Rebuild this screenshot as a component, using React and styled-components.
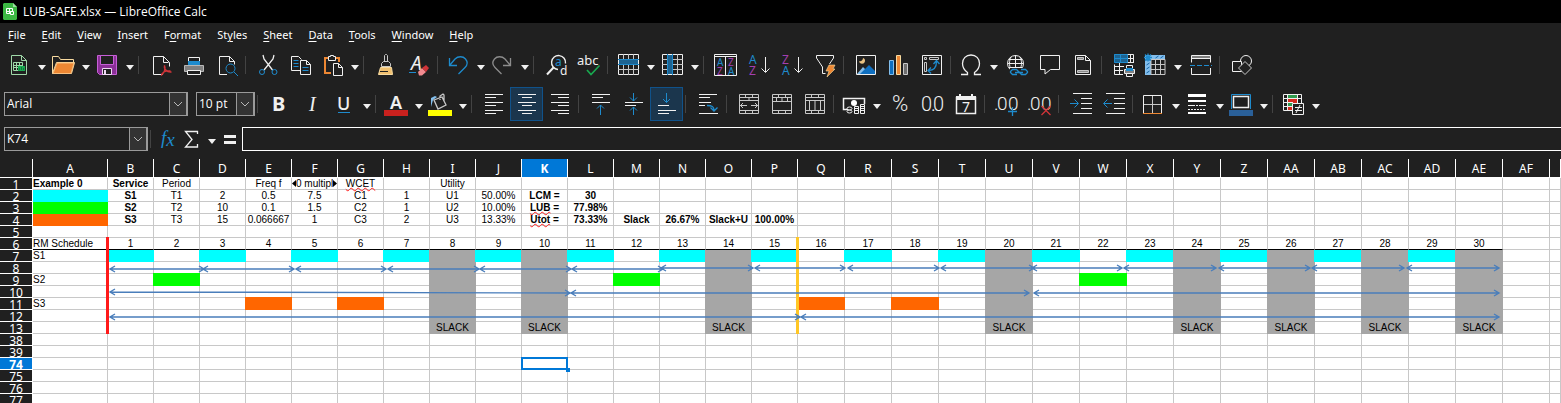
import React from "react";
import styled, { createGlobalStyle, css } from "styled-components";

const UI_FONT = '"Noto Sans", "Open Sans", sans-serif';
const CELL_FONT = '"Liberation Sans", Arial, sans-serif';

const color = {
  bg: "#202020",
  line: "#f0f0f0",
  soft: "#c8c8c8",
  blue: "#1e8bcd",
  purple: "#a33fb0",
  orange: "#ed8733",
  green: "#18ab50",
  red: "#d13438",
  select: "#0078d7",
  grid: "#c8c8c8",
};

const GlobalStyle = createGlobalStyle`
  *, *::before, *::after { box-sizing: border-box; }
  html, body { margin: 0; background: ${color.bg}; }
`;

/* ---------- frame ---------- */

const Window = styled.div`
  display: flex;
  flex-direction: column;
  height: 100vh;
  overflow: hidden;
  background: ${color.bg};
  color: #fff;
  font: 12px/16px ${UI_FONT};
`;

const TitleBar = styled.header`
  display: flex;
  align-items: center;
  gap: 6px;
  flex: none;
  height: 23px;
  padding-left: 3px;
  background: #000;
`;

const Title = styled.h1`
  margin: 0;
  font: 400 12px/16px "Open Sans", "Noto Sans", sans-serif;
`;

const MenuBar = styled.nav`
  display: flex;
  flex: none;
  align-items: center;
  gap: 16px;
  height: 24px;
  padding-left: 8px;
`;

const MenuItem = styled.button`
  padding: 0;
  border: 0;
  background: none;
  color: inherit;
  font: 11px/16px ${UI_FONT};

  u {
    text-underline-offset: 2px;
  }
`;

const ToolRow = styled.div`
  display: flex;
  flex: none;
  align-items: center;
  height: ${(p) => p.$height}px;
  padding-left: 4px;
`;

const Separator = styled.span`
  flex: none;
  width: 1px;
  height: 18px;
  margin: 0 5px 0 2px;
  background: #434343;
`;

const ToolButton = styled.button`
  display: flex;
  flex: none;
  align-items: center;
  justify-content: flex-start;
  width: ${(p) => (p.$split ? 30 : 33)}px;
  height: 34px;
  padding: 0 0 0 ${(p) => (p.$split ? 3 : 5)}px;
  border: 0;
  background: none;
  ${(p) =>
    p.$on &&
    css`
      background: #1b364d;
      box-shadow: inset 0 0 0 1px #10528a;
    `}
`;

const DropButton = styled.button`
  display: flex;
  flex: none;
  align-items: center;
  width: 14px;
  height: 34px;
  padding: 0;
  border: 0;
  background: none;
`;

const Glyph = styled.svg`
  display: block;
  flex: none;
  overflow: visible;
  fill: none;
  stroke: ${color.line};
  stroke-width: 1;

  text {
    stroke: none;
    fill: ${color.line};
    font-family: ${UI_FONT};
  }
`;

/* ---------- combo boxes ---------- */

const ComboBox = styled.label`
  display: grid;
  grid-template-columns: 1fr 18px;
  flex: none;
  width: ${(p) => p.$width}px;
  height: 24px;
  margin-right: ${(p) => p.$after}px;
  border: 1px solid #9a9a9a;
`;

const comboText = css`
  grid-row: 1;
  grid-column: 1 / 3;
  min-width: 0;
  padding: 0 20px 0 2px;
  border: 0;
  outline: 0;
  appearance: none;
  background: none;
  color: #fff;
  font: 12px/20px "Open Sans", "Noto Sans", sans-serif;
`;

const ComboSelect = styled.select`
  ${comboText}
`;

const ComboInput = styled.input`
  ${comboText}
`;

const ComboArrow = styled.span`
  display: flex;
  grid-row: 1;
  grid-column: 2;
  align-items: center;
  justify-content: center;
  border: 1px solid #9a9a9a;
  border-width: 0 1px;
  background: #333;
  pointer-events: none;
`;

const FormulaRow = styled.div`
  display: flex;
  flex: none;
  align-items: center;
  height: 34px;
  padding: 2px 0 8px 4px;
`;

const FormulaButton = styled.button`
  display: flex;
  flex: none;
  width: 24px;
  height: 24px;
  padding: 0;
  border: 0;
  background: none;
`;

const FormulaInput = styled.input`
  flex: 1;
  min-width: 0;
  height: 24px;
  border: 1px solid #fff;
  border-right: 0;
  outline: 0;
  background: ${color.bg};
  color: #fff;
  font: 12px/20px ${UI_FONT};
`;

/* ---------- sheet ---------- */

const Sheet = styled.main`
  position: relative;
  flex: 1;
  min-height: 0;
  overflow: hidden;
  background: #fff;
`;

const Table = styled.table`
  width: 100%;
  border-collapse: separate;
  border-spacing: 0;
  table-layout: fixed;
`;

const ColumnHead = styled.th`
  height: 19px;
  padding: 2px 0 0;
  border-right: 1px solid #fff;
  border-bottom: 1px solid #fff;
  background: ${(p) => (p.$active ? color.select : color.bg)};
  color: #fff;
  font: ${(p) => (p.$active ? 700 : 400)} 12px/16px ${UI_FONT};
`;

const RowHead = styled.th`
  height: 12px;
  padding: 0;
  border-right: 1px solid #fff;
  border-bottom: 1px solid #fff;
  background: ${(p) => (p.$active ? color.select : color.bg)};
  color: #fff;
  font: ${(p) => (p.$active ? 700 : 400)} 12px/13px ${UI_FONT};
`;

const RowNumber = styled.div`
  height: 11px;
  overflow: hidden;
`;

const Cell = styled.td`
  position: relative;
  height: 12px;
  padding: 0;
  border-right: 1px solid ${(p) => p.$fill || color.grid};
  border-bottom: 1px solid ${(p) => (p.$underline ? "#000" : p.$fill || color.grid)};
  background: ${(p) => p.$fill || "transparent"};
  color: #000;
  font: ${(p) => (p.$bold ? 700 : 400)} 10px/11px ${CELL_FONT};
  text-align: ${(p) => (p.$left ? "left" : "center")};
  white-space: nowrap;
  ${(p) =>
    p.$fill &&
    !p.$left &&
    css`
      box-shadow: -1px 0 0 0 ${p.$fill}${p.$coverTop ? `, 0 -1px 0 0 ${p.$fill}, -1px -1px 0 0 ${p.$fill}` : ""};
    `}
  ${(p) =>
    p.$marker &&
    css`
      &::after {
        content: "";
        position: absolute;
        z-index: 1;
        top: -1px;
        right: -2px;
        bottom: -1px;
        width: 3px;
        background: ${p.$marker};
      }
    `}
  ${(p) =>
    p.$cursor &&
    css`
      &::before {
        content: "";
        position: absolute;
        top: -1px;
        right: -1px;
        bottom: -1px;
        left: -1px;
        border: 2px solid ${color.select};
      }
      &::after {
        content: "";
        position: absolute;
        z-index: 1;
        right: -3px;
        bottom: -3px;
        width: 4px;
        height: 4px;
        background: ${color.select};
      }
    `}
`;

const CellText = styled.div`
  display: flex;
  align-items: center;
  justify-content: ${(p) => (p.$left ? "flex-start" : "center")};
  height: 11px;
  overflow: ${(p) => (p.$clip ? "hidden" : "visible")};
`;

const Misspelled = styled.span`
  text-decoration: underline wavy #ff2020 1px;
  text-decoration-skip-ink: none;
  text-underline-offset: 0;
`;

const ClippedText = styled.span`
  flex: 1;
  min-width: 0;
  overflow: hidden;
  text-align: left;
`;

const Drawing = styled.svg`
  position: absolute;
  top: 0;
  left: 0;
  z-index: 2;
  fill: none;
  stroke: #4a7ebb;
  stroke-width: 1.4;
  pointer-events: none;
`;

/* ---------- icons ---------- */

const B = color.blue;
const S = color.soft;

const icons = {
  newSheet: (
    <>
      <path stroke="#9fd8a8" d="M4.5 2.5h10l5 5v14h-15zM14.5 2.5v5h5" />
      <path stroke="#9fd8a8" d="M6.5 9.5h9v8h-9zM6.5 12.5h9M6.5 14.5h9M9.5 9.5v8M12.5 9.5v8" />
      <path fill="#18ab50" stroke="none" d="M11 13h7v5h-7z" />
      <path stroke="#107a38" d="M12.5 17v-2M14.5 17v-3M16.5 17v-2" />
    </>
  ),
  open: (
    <>
      <path stroke="#f8dba0" d="M1.5 20.5v-17h6l2 3h13v4M1.5 20.5l4-11h18l-3 11z" />
      <path fill={color.orange} stroke="#f8c080" d="M2 20.5l4-10.5h17l-3 10.5z" />
    </>
  ),
  save: (
    <>
      <path fill="#8b2f97" stroke="#c65fd6" d="M2.5 2.5h19v19h-17l-2-2z" />
      <path fill={color.bg} stroke="#c65fd6" d="M5.5 2.5h13v9h-13z" />
      <path fill={color.bg} stroke="#f0d8f4" d="M7.5 15.5h9v6h-9z" />
      <path fill="#f0d8f4" stroke="none" d="M9 17h2v5H9z" />
    </>
  ),
  pdf: (
    <>
      <path d="M14 21.5H4.5v-18h10l6 6v4M14.5 3.5v6h5" />
      <path stroke={color.red} strokeWidth="1.4" d="M15.500 12.500c1.500 3-.5 8-3.500 10M15.500 12.500c-1 3 2 7 7 6.500M12.500 21.500c2-3 5-4 9-3.500" />
    </>
  ),
  print: (
    <>
      <path fill="#808080" stroke="#b8b8b8" d="M2.500 12.500h19v6h-19z" />
      <path d="M6.500 10V4.500h11V10" />
      <path fill={B} stroke="none" d="M6 8h12v4H6z" />
      <path fill={color.bg} d="M5.500 17.500h13v4h-13z" />
    </>
  ),
  preview: (
    <>
      <path d="M12 21.500H4.500v-18h10l5 5v3M14.500 3.500v5h5" />
      <circle cx="15.500" cy="15.500" r="4.500" stroke={B} />
      <path stroke={B} d="M19 19l4 4" />
    </>
  ),
  cut: (
    <>
      <path strokeWidth="1.3" d="M7 2l1 4 8.500 11M18 2l-1 4L8 17" />
      <circle cx="6" cy="19" r="2.500" stroke={B} />
      <circle cx="18.500" cy="19" r="2.500" stroke={B} />
    </>
  ),
  copy: (
    <>
      <path d="M11 17.500H2.500v-14h7l3 3" />
      <path stroke={B} d="M4.500 7.500h5M4.500 10.500h5M4.500 13.500h5" />
      <path d="M11.500 7.500h6l4 4v10h-10zM17.500 7.500v4h4" />
      <path stroke={B} d="M13.500 14.500h6M13.500 17.500h6" />
    </>
  ),
  paste: (
    <>
      <path stroke={color.orange} strokeWidth="2" d="M11 20H5V5h3M16 5h3v4" />
      <path d="M8.500 7.500v-4h2v-1h3v1h2v4z" />
      <path fill={color.bg} d="M13.500 10.500h5l4 4v8h-9zM18.500 10.500v4h4" />
    </>
  ),
  clone: (
    <>
      <path stroke={S} d="M10.500 8.500v-6l1-1h1l1 1v6M7.500 13.500v-3l2-2h5l2 2v3z" />
      <path fill="#f0c070" stroke="#f8dba0" d="M6.500 14.500h11l1 7h-14z" />
      <path stroke={color.bg} d="M6 18.500h8" />
    </>
  ),
  clear: (
    <>
      <text x="4" y="17" fontSize="19" fontStyle="italic">A</text>
      <path stroke={B} d="M2 19.500h7" />
      <path fill="#f28b90" stroke="none" d="M11 19l4-4 4 4-4 3.500h-3z" />
      <path fill={color.red} stroke="none" d="M15 15l4-3 3 3-3 4z" />
    </>
  ),
  undo: <path stroke={B} strokeWidth="1.300" d="M3.500 5v7.500H11M3.500 12.500L9 6c3-3 8-3 10.500 0s2 6-.5 8.500L12.500 21" />,
  redo: <path stroke="#8c8c8c" strokeWidth="1.300" d="M20.500 5v7.500H13M20.500 12.500L15 6C12 3 7 3 4.500 6s-2 6 .5 8.500L11.500 21" />,
  find: (
    <>
      <path d="M14 16.500a7 7 0 1 1 7.500-6" strokeWidth="1.400" />
      <path strokeWidth="2" d="M9.500 14.500L3 21.500" />
      <text x="11" y="13" fontSize="12" style={{ fill: B }}>a</text>
      <text x="16" y="22" fontSize="12">d</text>
    </>
  ),
  spell: (
    <>
      <text x="0" y="12" fontSize="13">abc</text>
      <path stroke={color.green} strokeWidth="1.600" d="M10 17l4 4.500 8.500-9" />
    </>
  ),
  row: (
    <>
      <path fill="#1d6391" stroke="none" d="M2 6h21v6H2z" />
      <path d="M2.500 1.500h20v20h-20z" />
      <path stroke={S} d="M2 6.500h21M2 11.500h21M2 16.500h21M7.500 1v5M12.500 1v5M17.500 1v5M7.500 12v10M12.500 12v10M17.500 12v10" />
      <path stroke={B} d="M2 6.500h21M2 11.500h21" />
    </>
  ),
  column: (
    <>
      <path fill="#1d6391" stroke="none" d="M7 1h6v21H7z" />
      <path d="M2.500 1.500h20v20h-20z" />
      <path stroke={S} d="M2 6.500h5M13 6.500h10M2 11.500h5M13 11.500h10M2 16.500h5M13 16.500h10M17.500 1v21" />
      <path stroke={B} d="M7.500 1v21M12.500 1v21" />
    </>
  ),
  sort: (
    <>
      <path d="M.5 1.500h22v21H.5zM0 3.500h23M11.500 4v19" />
      <text x="3" y="13" fontSize="10" style={{ fill: B }}>A</text>
      <text x="3" y="22" fontSize="10" style={{ fill: color.purple }}>Z</text>
      <text x="14" y="13" fontSize="10" style={{ fill: color.purple }}>Z</text>
      <text x="14" y="22" fontSize="10" style={{ fill: B }}>A</text>
    </>
  ),
  ascending: (
    <>
      <text x="2" y="11" fontSize="12" style={{ fill: B }}>A</text>
      <text x="2" y="22" fontSize="12" style={{ fill: color.purple }}>Z</text>
      <path d="M18.500 4v15M14.500 15.500l4 4 4-4" />
    </>
  ),
  descending: (
    <>
      <text x="2" y="11" fontSize="12" style={{ fill: color.purple }}>Z</text>
      <text x="2" y="22" fontSize="12" style={{ fill: B }}>A</text>
      <path d="M18.500 4v15M14.500 15.500l4 4 4-4" />
    </>
  ),
  filter: (
    <>
      <path d="M9.500 20.500V14L3.500 5V2.500h17V5l-4 6M9.500 20.500h3" />
      <path fill={color.orange} stroke="#f8dba0" strokeWidth=".6" d="M16 12h6l-2 4h2l-8 8 2-6h-3z" />
    </>
  ),
  image: (
    <>
      <path d="M2.500 2.500h19v19h-19z" />
      <path fill="#83beec" stroke="none" d="M3 21l6-7 4 4 3 3z" />
      <path fill="#0f6fc0" stroke="none" d="M6 21l9-9 6 6v3z" />
      <path fill="#eac282" stroke="none" d="M9 5a3 3 0 1 1-4 3c2 1 4-1 4-3z" />
    </>
  ),
  chart: (
    <>
      <path fill="#0f6fc0" stroke="#83beec" d="M2.500 7.500h4v14h-4z" />
      <path fill={color.orange} stroke="#f8dba0" d="M9.500 2.500h4v19h-4z" />
      <path fill="#6e6e6e" stroke={S} d="M16.500 10.500h4v11h-4z" />
    </>
  ),
  pivot: (
    <>
      <path d="M2.500 2.500h19v19h-19z" />
      <path stroke={S} d="M4.500 4.500h2v2h-2zM9.500 4.500h9v2h-9zM4.500 9.500h2v9h-2z" />
      <path stroke={B} strokeWidth="1.300" d="M8.500 17.500c5 0 8-3 8-9M13.500 11l3-3.500 3 3.500M11 14.500l-3 3 3 3" />
    </>
  ),
  omega: <path strokeWidth="1.300" d="M2 21.500h6.500v-2C5 17 3.500 14 3.500 10.500c0-5 3.500-8.500 8.500-8.500s8.500 3.500 8.500 8.500c0 3.500-1.500 6.500-5 9v2H22" />,
  link: (
    <>
      <circle cx="10.500" cy="10.500" r="8" />
      <path d="M6 17c-2-5-2-9 0-13M10.500 2v15M15 17c2-5 2-9 0-13M2.500 10.500h16M4 6.500h13M4 14.500h13" />
      <path fill={color.bg} stroke="none" d="M5 15h18v8H5z" />
      <path stroke={B} strokeWidth="1.300" d="M12 21.500H7.500l-2-2v-1l2-2h4l2 2v1M16 16.500h4.500l2 2v1l-2 2h-4l-2-2v-1M10 19.500h8" />
    </>
  ),
  comment: <path d="M2.500 2.500h19v14h-9l-5.500 4.500v-4.500h-4.500z" />,
  header: (
    <>
      <path d="M4.500 2.500h10l5 5v14h-15zM14.500 2.500v5h5" />
      <path fill="#8c8c8c" stroke={S} d="M6.500 4.500h6v2h-6zM6.500 17.500h11v2h-11z" />
    </>
  ),
  printArea: (
    <>
      <path fill="#1d6391" stroke="none" d="M2 1h13v9H2z" />
      <path d="M11 21.500H2.500v-10M21.500 10V1.500H15M2 17.500h9M2 13.500h10M7.500 10v12M15 5.500h7M15 9.500h7M18.500 1v9" />
      <path stroke={B} d="M2.500 1.500h13v8h-13zM2 5.500h13M8.500 1v8" />
      <path fill={color.bg} d="M14.500 17v-4.500h6V17" />
      <path fill="#808080" d="M12.500 16.500h10v4h-10z" />
      <path fill={B} stroke="none" d="M14 15h7v3h-7z" />
      <path fill={color.bg} d="M14.500 20.500h6v3h-6z" />
    </>
  ),
  freeze: (
    <>
      <path fill="#83beec" stroke="none" d="M2 2h20v5H8v15H2z" />
      <path stroke={S} d="M8 11.500h14M8 16.500h14M12.500 7v15M17.500 7v15M8 6.500h14v15H8z" />
      <path stroke="#1565a8" d="M12.500 5l3-2M17.500 5l3-2M3.500 12l3-2M3.500 16l3-2M3.500 20l3-2M2 7h5" />
      <path stroke={B} strokeWidth="1.300" d="M5 .5v8M1 4.500h8M2 1.500l6 6M8 1.500l-6 6" />
    </>
  ),
  split: (
    <>
      <path fill="#7d7d7d" stroke="none" d="M3 3h18v3H3z" />
      <path d="M2.500 9.500v-7h19v7M2.500 5.500h19M2.500 15v6.500h19V15" />
      <path stroke={B} strokeDasharray="5 2" d="M1 12.500h22" />
    </>
  ),
  shapes: (
    <>
      <circle cx="16" cy="8" r="5.500" />
      <path fill={color.bg} d="M2.500 8.500h9v10h-9z" />
      <path fill={color.bg} stroke={S} d="M15 8.500l6.500 6.500-6.500 6.500L8.500 15z" />
    </>
  ),
  bold: <text x="4" y="19" fontSize="20" fontWeight="700">B</text>,
  italic: <text x="8" y="19" fontSize="20" fontStyle="italic" style={{ fontFamily: '"Liberation Serif", serif' }}>I</text>,
  underline: (
    <>
      <text x="5" y="18" fontSize="18" fontWeight="500">U</text>
      <path stroke={B} d="M6 20.500h12" />
    </>
  ),
  fontColor: (
    <>
      <text x="6" y="17" fontSize="18" fontWeight="600">A</text>
      <path fill="#c9211e" stroke="none" d="M0 18h24v6H0z" />
    </>
  ),
  highlight: (
    <>
      <path fill="#83beec" stroke="none" d="M3 15V6l4-2 2 1-4 3z" />
      <path stroke={S} strokeWidth="1.300" d="M6 8l8-3 4 8-8 4zM12 8V4l3-2 1 1v6" />
      <path fill="#ffff00" stroke="none" d="M0 18h24v6H0z" />
    </>
  ),
  left: <path d="M3 2.500h18M3 5.500h11M3 10.500h18M3 13.500h11M3 18.500h18M3 21.500h11" />,
  center: <path d="M3 2.500h18M7 5.500h10M3 10.500h18M7 13.500h10M3 18.500h18M7 21.500h10" />,
  right: <path d="M3 2.500h18M10 5.500h11M3 10.500h18M10 13.500h11M3 18.500h18M10 21.500h11" />,
  top: (
    <>
      <path d="M3 2.500h18M3 5.500h11M3 10.500h18" />
      <path stroke={B} d="M11.500 23V13M8 16.500l3.500-3.500 3.500 3.500" />
    </>
  ),
  middle: (
    <>
      <path d="M3 10.500h18M3 13.500h11" />
      <path stroke={B} d="M11.500 1v8M8 5.500L11.500 9 15 5.500M11.500 23v-8M8 18.500l3.500-3.500 3.500 3.500" />
    </>
  ),
  bottom: (
    <>
      <path d="M3 13.500h11M3 18.500h18M3 21.500h11" />
      <path stroke={B} d="M11.500 1v9.500M8 7l3.500 3.500L15 7" />
    </>
  ),
  wrap: (
    <>
      <path d="M3 2.500h18M3 5.500h11M3 10.500h12M3 13.500h6M3 21.500h19" />
      <path stroke={B} strokeWidth="1.300" d="M11 13.500c5 0 7 1 7 5M14.500 15.500l3.500 3.500 3.500-3.500" />
    </>
  ),
  merge: <path stroke={S} d="M2.500 2.500h19v19h-19zM2 5.500h20M2 8.500h20M2 18.500h20M8.500 2v3M15.500 2v3M12 5v3M8.500 19v3M15.500 19v3M3 13.500h7M14 13.500h7M6 11l-2.500 2.500L6 16M18 11l2.500 2.500L18 16" />,
  mergeCenter: <path stroke={S} d="M2.500 2.500h19v19h-19zM2 5.500h20M2 9.500h20M2 18.500h20M8.500 2v3M15.500 2v3M6.500 6v3M12 6v3M17.500 6v3M8.500 19v3M15.500 19v3" />,
  unmerge: <path stroke={S} d="M2.500 2.500h19v19h-19zM2 5.500h20M2 8.500h20M2 18.500h20M8.500 2v3M15.500 2v3M6.500 9v9M12 9v9M17.500 9v9M8.500 19v3M15.500 19v3" />,
  currency: (
    <>
      <path strokeWidth="1.500" d="M6 17.500H1.500v-11h21V12" />
      <circle cx="12" cy="11" r="3" fill="#fff" stroke="none" />
      <ellipse cx="7.500" cy="16.500" rx="2.500" ry="1.500" />
      <ellipse cx="7.500" cy="19.500" rx="2.500" ry="1.500" />
      <path d="M12.500 14.500h4v7h-4zM12 16.500h5M12 18.500h5M18.500 12.500h4v9h-4zM18 14.500h5M18 16.500h5M18 18.500h5" />
    </>
  ),
  percent: <text x="4" y="19" fontSize="22" fontWeight="300" style={{ fontFamily: "Roboto, sans-serif" }}>%</text>,
  number: (
    <text y="19" fontSize="20" fontWeight="300" style={{ fontFamily: "Roboto, sans-serif" }}>
      <tspan x="0">0</tspan><tspan x="10">.</tspan><tspan x="12">0</tspan>
    </text>
  ),
  date: (
    <>
      <path strokeWidth="1.500" d="M2.500 5.500h19v16h-19z" />
      <path fill="#f0f0f0" stroke="none" d="M2 4h20v4H2zM5 2h2v3H5zM17 2h2v3h-2z" />
      <text x="8" y="20" fontSize="14">7</text>
    </>
  ),
  addDecimal: (
    <>
      <text y="18" fontSize="19" fontWeight="300" style={{ fontFamily: "Roboto, sans-serif" }}>
        <tspan x="-1">.</tspan><tspan x="2">0</tspan><tspan x="13">0</tspan>
      </text>
      <path stroke={B} strokeWidth="1.300" d="M17.500 15v9M13 19.500h9" />
    </>
  ),
  delDecimal: (
    <>
      <text y="18" fontSize="19" fontWeight="300" style={{ fontFamily: "Roboto, sans-serif" }}>
        <tspan x="-1">.</tspan><tspan x="2">0</tspan><tspan x="13">0</tspan>
      </text>
      <path stroke={color.red} strokeWidth="1.300" d="M13.500 14l9 9M22.500 14l-9 9" />
    </>
  ),
  indent: (
    <>
      <path d="M4 1.500h19M12 6.500h11M12 11.500h11M12 16.500h11M4 21.500h19" />
      <path stroke={B} d="M1 11.500h8M5.500 7.500l4 4-4 4" />
    </>
  ),
  outdent: (
    <>
      <path d="M4 1.500h19M12 6.500h11M12 11.500h11M12 16.500h11M4 21.500h19" />
      <path stroke={B} d="M2 11.500h8M5.500 7.500l-4 4 4 4" />
    </>
  ),
  borders: (
    <>
      <path d="M2.500 21V3.500h18V21" />
      <path stroke={S} d="M11.500 4v17M3 12.500h17" />
      <path stroke={color.orange} d="M2 21.500h19" />
    </>
  ),
  lineStyle: (
    <>
      <path fill="#fff" stroke="none" d="M3 2h18v3H3zM3 8h18v2H3zM3 20h18v2H3z" />
      <path strokeDasharray="7 1 2 1" d="M3 13.500h18" />
      <path strokeDasharray="2 1" d="M3 17.500h18" />
    </>
  ),
  borderColor: (
    <>
      <path stroke={B} d="M2.500 17V2.500h19V17" />
      <path strokeWidth="1.500" d="M4.500 4.500h15v11h-15z" />
      <path fill="#2a6099" stroke="none" d="M0 18h24v6H0z" />
    </>
  ),
  conditional: (
    <>
      <path fill="#2f9a4c" stroke="none" d="M6 2h10v5H6z" />
      <path fill="#d62a1e" stroke="none" d="M6 7h10v4H6zM6 15h5v4H6z" />
      <path fill="#2f9a4c" stroke="none" d="M6 11h5v4H6z" />
      <path d="M11 18.500H2.500v-16h18V11M2 6.500h19M2 10.500h10M2 14.500h9M6.500 2v17M16.500 2v9" />
      <path fill={color.bg} d="M11.500 11.500h11v11h-11z" />
      <path d="M14 15.500h7M14 18.500h7M19 13l-4 8" />
    </>
  ),
  sum: <path strokeWidth="1.300" d="M17.500 7V4.500h-12l6.500 8-6.500 7.500h12v-3" />,
  equals: <path strokeWidth="3" d="M6 9.500h12M6 15.500h12" />,
  fx: (
    <text x="5" y="17" fontSize="19" fontStyle="italic" style={{ fill: B, fontFamily: '"Liberation Serif", serif' }}>
      f<tspan dy="2">x</tspan>
    </text>
  ),
};

function Icon({ name }) {
  return (
    <Glyph width="24" height="24" viewBox="0 0 24 24" aria-hidden="true">
      {icons[name]}
    </Glyph>
  );
}

function DropArrow({ label }) {
  return (
    <DropButton aria-label={label}>
      <Glyph width="14" height="24" viewBox="0 0 14 24" aria-hidden="true">
        <path fill="#f0f0f0" stroke="none" d="M4 12h8l-4 5z" />
      </Glyph>
    </DropButton>
  );
}

/* Items ending in "+" carry a drop-down; "*" marks a pressed toggle; "|" is a separator. */
function Tools({ items }) {
  return items.split(" ").map((item, i) => {
    if (item === "|") return <Separator key={i} />;
    const name = item.replace(/[+*]/, "");
    const split = item.endsWith("+");
    return (
      <React.Fragment key={i}>
        <ToolButton $split={split} $on={item.endsWith("*")} aria-label={name}>
          <Icon name={name} />
        </ToolButton>
        {split && <DropArrow label={`${name} options`} />}
      </React.Fragment>
    );
  });
}

const STANDARD =
  "newSheet+ open+ save+ | pdf print preview | cut copy paste+ | clone clear | undo+ redo+ | find spell | row+ column+ | sort ascending descending filter | image chart pivot | omega+ link comment header | printArea freeze+ split | shapes";
const FORMATTING =
  "| bold italic underline+ | fontColor+ highlight+ | left center* right | top middle bottom* | wrap | merge mergeCenter unmerge | currency+ percent number date | addDecimal delDecimal | indent outdent | borders+ lineStyle+ borderColor+ | conditional+";

function Chevron() {
  return (
    <ComboArrow>
      <Glyph width="10" height="8" viewBox="0 0 10 8" aria-hidden="true">
        <path stroke="#b8b8b8" d="M1 2l4 4 4-4" />
      </Glyph>
    </ComboArrow>
  );
}

/* ---------- sheet data ---------- */

const CYAN = "#00ffff";
const GREEN = "#00ff00";
const ORANGE = "#ff6600";
const GRAY = "#a6a6a6";

const columns = [..."ABCDEFGHIJKLMNOPQRSTUVWXYZ", "AA", "AB", "AC", "AD", "AE", "AF"];
const rows = [1, 2, 3, 4, 5, 6, 7, 8, 9, 10, 11, 12, 13, 38, 39, 74, 75, 76, 77];
const LAST_SLOT = 30;
const slackSlots = [8, 10, 14, 20, 24, 26, 28, 30];

const values = {
  1: { A: "Example 0", B: "Service", C: "Period", E: "Freq f", F: "0 multiple", G: "WCET", I: "Utility" },
  2: { B: "S1", C: "T1", D: "2", E: "0.5", F: "7.5", G: "C1", H: "1", I: "U1", J: "50.00%", K: "LCM =", L: "30" },
  3: { B: "S2", C: "T2", D: "10", E: "0.1", F: "1.5", G: "C2", H: "1", I: "U2", J: "10.00%", K: "LUB =", L: "77.98%" },
  4: { B: "S3", C: "T3", D: "15", E: "0.066667", F: "1", G: "C3", H: "2", I: "U3", J: "13.33%", K: "Utot =", L: "73.33%", M: "Slack", N: "26.67%", O: "Slack+U", P: "100.00%" },
  6: { A: "RM Schedule" },
  7: { A: "S1" },
  9: { A: "S2" },
  11: { A: "S3" },
};

const legend = { 2: CYAN, 3: GREEN, 4: ORANGE };
const runs = {
  7: { slots: [1, 3, 5, 7, 9, 11, 13, 15, 17, 19, 21, 23, 25, 27, 29], fill: CYAN },
  9: { slots: [2, 12, 22], fill: GREEN },
  11: { slots: [4, 6, 16, 18], fill: ORANGE },
};
const misspelled = ["WCET", "LUB", "Utot"];

function describe(row, name, slot) {
  const inChart = row >= 6 && row <= 13;
  const onTimeline = inChart && slot >= 1 && slot <= LAST_SLOT;
  let text = values[row]?.[name];
  let fill;
  if (slot === 0) fill = legend[row];
  if (onTimeline && row === 6) text = String(slot);
  if (onTimeline && row > 6) {
    if (runs[row]?.slots.includes(slot)) fill = runs[row].fill;
    else if (slackSlots.includes(slot)) fill = GRAY;
    if (row === 13 && slackSlots.includes(slot)) text = "SLACK";
  }
  return {
    text,
    fill,
    bold: (row === 1 && slot <= 1) || (row < 5 && (slot === 1 || slot >= 10)),
    underline: row === 6 && slot <= LAST_SLOT,
    marker: inChart ? { 0: "#ff1a1a", 15: "#ffc726" }[slot] : undefined,
    cursor: row === 74 && name === "K",
  };
}

function CellContent({ text, left }) {
  if (text === "0 multiple") {
    return (
      <CellText $clip>
        <Glyph width="4" height="7" viewBox="0 0 4 7" aria-hidden="true">
          <path fill="#000" stroke="none" d="M4 0v7L0 3.500z" />
        </Glyph>
        <ClippedText>{text}</ClippedText>
        <Glyph width="4" height="7" viewBox="0 0 4 7" aria-hidden="true">
          <path fill="#000" stroke="none" d="M0 0v7l4-3.500z" />
        </Glyph>
      </CellText>
    );
  }
  const [word, ...rest] = text.split(" ");
  if (misspelled.includes(word)) {
    return (
      <CellText>
        <Misspelled>{word}</Misspelled>
        {rest.length > 0 && <>&nbsp;{rest.join(" ")}</>}
      </CellText>
    );
  }
  return <CellText $left={left}>{text}</CellText>;
}

/* Period arrows: [start x, start y, end x, end y] in sheet pixels. */
const spans = [
  [110, 110, 204, 110], [203, 110, 294, 110], [296, 110, 386, 110], [388, 110, 479, 110],
  [480, 110, 571, 110], [572, 110, 663, 110], [661, 109, 753, 109], [755, 109, 845, 109],
  [848, 109, 939, 109], [941, 109, 1034, 109], [1032, 109, 1122, 109], [1124, 109, 1216, 109],
  [1219, 109, 1310, 109], [1312, 109, 1404, 109], [1407, 109, 1499, 109],
  [110, 133, 570, 134], [571, 134, 1029, 134], [1034, 134, 1499, 134],
  [110, 158, 800, 158], [801, 158, 1499, 158],
];

function SpanArrow({ x1, y1, x2, y2 }) {
  return (
    <path d={`M${x1} ${y1}L${x2} ${y2}M${x1 + 5} ${y1 - 3}l-5 3 5 3M${x2 - 5} ${y2 - 3}l5 3-5 3`} />
  );
}

function Spreadsheet() {
  return (
    <Sheet>
      <Table aria-label="Rate monotonic schedule">
        <colgroup>
          <col width="33" />
          {columns.map((c, i) => (
            <col key={c} width={i === 0 ? 75 : i < 16 ? 46 : 47} />
          ))}
          <col />
        </colgroup>
        <thead>
          <tr>
            <ColumnHead aria-label="Select all" />
            {columns.map((c) => (
              <ColumnHead key={c} scope="col" $active={c === "K"}>{c}</ColumnHead>
            ))}
            <ColumnHead />
          </tr>
        </thead>
        <tbody>
          {rows.map((r) => (
            <tr key={r}>
              <RowHead scope="row" $active={r === 74}>
                <RowNumber>{r}</RowNumber>
              </RowHead>
              {columns.map((c, slot) => {
                const d = describe(r, c, slot);
                return (
                  <Cell
                    key={c}
                    $left={slot === 0}
                    $fill={d.fill}
                    $coverTop={r === 9 || r === 11}
                    $bold={d.bold}
                    $underline={d.underline}
                    $marker={d.marker}
                    $cursor={d.cursor}
                  >
                    {d.text && <CellContent text={d.text} left={slot === 0} />}
                  </Cell>
                );
              })}
              <Cell />
            </tr>
          ))}
        </tbody>
      </Table>
      <Drawing width="1510" height="170" viewBox="0 0 1510 170" aria-hidden="true">
        {spans.map(([x1, y1, x2, y2], i) => (
          <SpanArrow key={i} x1={x1} y1={y1} x2={x2} y2={y2} />
        ))}
      </Drawing>
    </Sheet>
  );
}

const menus = [
  ["", "F", "ile"], ["", "E", "dit"], ["", "V", "iew"], ["", "I", "nsert"], ["F", "o", "rmat"],
  ["St", "y", "les"], ["", "S", "heet"], ["", "D", "ata"], ["", "T", "ools"], ["", "W", "indow"], ["", "H", "elp"],
];

export default function App() {
  return (
    <Window>
      <GlobalStyle />
      <TitleBar>
        <Glyph width="14" height="17" viewBox="0 0 14 17" aria-hidden="true">
          <path fill="#3cb843" stroke="none" d="M1 0h9l4 4v12l-1 1H1l-1-1V1z" />
          <path fill="#9be29f" stroke="none" d="M10 0l4 4h-4z" />
          <path stroke="#fff" d="M3.500 5.500h6v5h-6zM3 8.500h7M6.500 5v6" />
          <path fill="#3cb843" stroke="#fff" d="M7.500 8.500h3v3h-3z" />
        </Glyph>
        <Title>LUB-SAFE.xlsx — LibreOffice Calc</Title>
      </TitleBar>
      <MenuBar aria-label="Main menu">
        {menus.map(([before, key, after]) => (
          <MenuItem key={before + key + after}>
            {before}<u>{key}</u>{after}
          </MenuItem>
        ))}
      </MenuBar>
      <ToolRow $height={36} role="toolbar" aria-label="Standard">
        <Tools items={STANDARD} />
      </ToolRow>
      <ToolRow $height={42} role="toolbar" aria-label="Formatting">
        <ComboBox $width={184} $after={8}>
          <ComboSelect aria-label="Font name" defaultValue="Arial">
            <option>Arial</option>
          </ComboSelect>
          <Chevron />
        </ComboBox>
        <ComboBox $width={59} $after={0}>
          <ComboSelect aria-label="Font size" defaultValue="10 pt">
            <option>10 pt</option>
          </ComboSelect>
          <Chevron />
        </ComboBox>
        <Tools items={FORMATTING} />
      </ToolRow>
      <FormulaRow>
        <ComboBox $width={144} $after={0}>
          <ComboInput aria-label="Name box" defaultValue="K74" />
          <Chevron />
        </ComboBox>
        <Separator />
        <FormulaButton aria-label="Function wizard"><Icon name="fx" /></FormulaButton>
        <FormulaButton aria-label="Select function"><Icon name="sum" /></FormulaButton>
        <DropArrow label="Function list" />
        <FormulaButton aria-label="Formula"><Icon name="equals" /></FormulaButton>
        <FormulaInput aria-label="Input line" />
      </FormulaRow>
      <Spreadsheet />
    </Window>
  );
}
